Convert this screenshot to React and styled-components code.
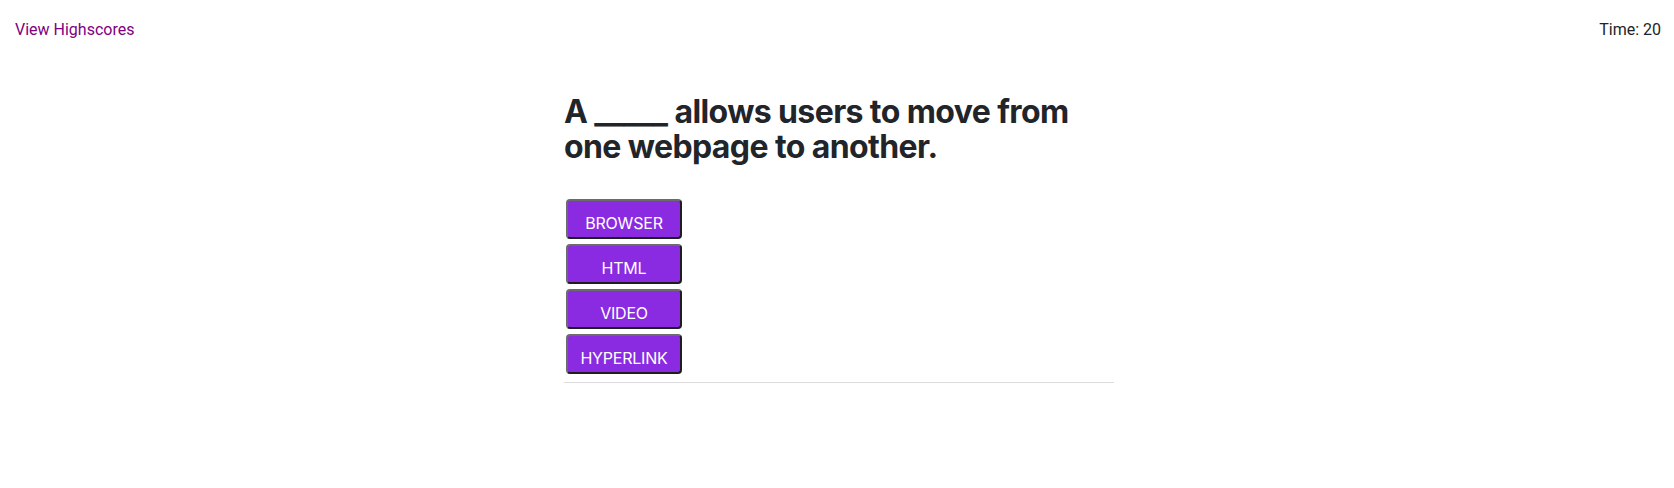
import React from "react";
import styled, { createGlobalStyle } from "styled-components";

const Global = createGlobalStyle`
  html, body { margin: 0; padding: 0; background: #fff; }
  body { font-family: Inter, "Noto Sans", sans-serif; color: #212529; font-size: 16px; line-height: 1.5; }
`;

const Header = styled.header`
  display: flex;
  justify-content: space-between;
  align-items: center;
  padding: 18px 13px 0 15px;
  height: 24px;
`;

const Link = styled.a`
  color: #800080;
  text-decoration: none;
  font-family: Roboto, "Liberation Sans", sans-serif;
  font-size: 16px;
  line-height: 24px;
`;

const Timer = styled.span`
  color: #212529;
  font-family: Roboto, "Liberation Sans", sans-serif;
  font-size: 16px;
  line-height: 24px;
`;

const Stage = styled.div`
  display: flex;
  justify-content: center;
  padding-left: 4px;
  margin-top: 52px;
`;

const Quiz = styled.main`
  width: 550px;
`;

const Question = styled.h2`
  margin: 0 0 35px;
  font-size: 32px;
  font-weight: 700;
  letter-spacing: -0.6px;
  line-height: 35px;
  color: #212529;
`;

const Choices = styled.div`
  display: flex;
  flex-direction: column;
  align-items: flex-start;
  gap: 5px;
  padding-left: 2px;
`;

const Choice = styled.button`
  width: 116px;
  height: 40px;
  box-sizing: border-box;
  background: #8a2be2;
  color: #fff;
  font-family: Inter, "Noto Sans", sans-serif;
  font-size: 16px;
  letter-spacing: -0.2px;
  border-radius: 4px;
  border-style: solid;
  border-width: 2px;
  border-color: #6b6b6b #1e1e1e #1e1e1e #6b6b6b;
  padding: 8px 0 0;
  cursor: pointer;
`;

const Divider = styled.hr`
  margin: 8px 0 0;
  border: 0;
  border-top: 1px solid #dcdcdc;
`;

export default function App() {
  const choices = ["BROWSER", "HTML", "VIDEO", "HYPERLINK"];
  return (
    <>
      <Global />
      <Header>
        <Link href="#">View Highscores</Link>
        <Timer>Time: 20</Timer>
      </Header>
      <Stage>
        <Quiz>
          <Question>A _____ allows users to move from one webpage to another.</Question>
          <Choices>
            {choices.map((c) => (
              <Choice key={c}>{c}</Choice>
            ))}
          </Choices>
          <Divider />
        </Quiz>
      </Stage>
    </>
  );
}
